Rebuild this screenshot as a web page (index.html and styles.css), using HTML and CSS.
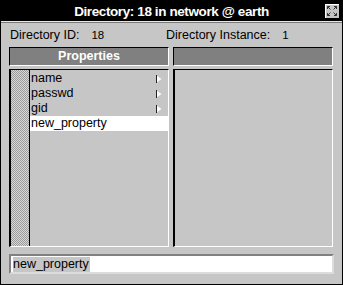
FILE: index.html
```html
<!DOCTYPE html>
<html>
<head>
    <meta charset="UTF-8">
    <title>Directory</title>
    <link rel="stylesheet" href="styles.css">
</head>
<body>
    <div class="window">
        <div class="titlebar">
            <span class="title">Directory: 18 in network @ earth</span>
            <span class="close-btn">
                <svg width="14" height="14" viewBox="0 0 14 14">
                    <rect x="0" y="0" width="14" height="14" fill="#c6c6c6"/>
                    <path d="M0 0.5H14M0.5 0V14" stroke="#fff"/>
                    <path d="M2.5 2.5L5.5 5.5M2.5 2.5V5M2.5 2.5H5" stroke="#333" fill="none"/>
                    <path d="M11.5 2.5L8.5 5.5M11.5 2.5V5M11.5 2.5H9" stroke="#333" fill="none"/>
                    <path d="M2.5 11.5L5.5 8.5M2.5 11.5V9M2.5 11.5H5" stroke="#333" fill="none"/>
                    <path d="M11.5 11.5L8.5 8.5M11.5 11.5V9M11.5 11.5H9" stroke="#333" fill="none"/>
                </svg>
            </span>
        </div>
        <div class="content">
            <div class="info-row">
                <div class="info first"><span class="label">Directory ID:</span><span class="value">18</span></div>
                <div class="info"><span class="label">Directory Instance:</span><span class="value">1</span></div>
            </div>
            <div class="columns">
                <div class="column">
                    <div class="col-header">Properties</div>
                    <div class="panel">
                        <div class="hatch"></div>
                        <ul class="list">
                            <li class="item">name <svg class="arrow" width="6" height="8" viewBox="0 0 6 8"><path d="M0.5 0.5L5.5 4L0.5 7.5Z" fill="#fff"/><path d="M0.5 0V8" stroke="#222"/></svg></li>
                            <li class="item">passwd <svg class="arrow" width="6" height="8" viewBox="0 0 6 8"><path d="M0.5 0.5L5.5 4L0.5 7.5Z" fill="#fff"/><path d="M0.5 0V8" stroke="#222"/></svg></li>
                            <li class="item">gid <svg class="arrow" width="6" height="8" viewBox="0 0 6 8"><path d="M0.5 0.5L5.5 4L0.5 7.5Z" fill="#fff"/><path d="M0.5 0V8" stroke="#222"/></svg></li>
                            <li class="item selected">new_property</li>
                        </ul>
                    </div>
                </div>
                <div class="column">
                    <div class="col-header"></div>
                    <div class="panel"></div>
                </div>
            </div>
            <div class="field"><span class="field-text">new_property</span></div>
        </div>
    </div>
</body>
</html>
```

FILE: styles.css
```css
body {
    margin: 0;
    background-color: #c6c6c6;
    font-family: 'Liberation Sans', Arial, sans-serif;
}

.window {
    width: 343px;
    height: 285px;
    box-sizing: border-box;
    border: 1px solid #000;
    background-color: #c6c6c6;
    display: flex;
    flex-direction: column;
}

.titlebar {
    height: 20px;
    background-color: #000;
    border-bottom: 1px solid #e6e6e6;
    display: flex;
    align-items: center;
    justify-content: center;
    position: relative;
}

.title {
    color: #fff;
    font-weight: bold;
    font-size: 13.5px;
    letter-spacing: -0.4px;
}

.close-btn {
    position: absolute;
    right: 3px;
    top: 3px;
    width: 14px;
    height: 14px;
    display: block;
}

.close-btn svg {
    display: block;
}

.content {
    flex: 1;
    border-top: 1px solid #7a7a7a;
    padding: 0 8px;
    display: flex;
    flex-direction: column;
}

.info-row {
    display: flex;
    height: 24px;
    align-items: center;
    font-size: 12.5px;
    color: #000;
}

.info {
    padding-left: 1px;
}

.info.first {
    width: 155px;
}

.info .value {
    margin-left: 12px;
    font-size: 11.5px;
}

.columns {
    display: flex;
    gap: 4px;
}

.column {
    width: 160px;
    display: flex;
    flex-direction: column;
}

.col-header {
    height: 17px;
    background-color: #808080;
    border-top: 1px solid #000;
    border-left: 1px solid #000;
    border-bottom: 1px solid #fff;
    border-right: 1px solid #fff;
    color: #fff;
    font-weight: bold;
    font-size: 12.5px;
    text-align: center;
    line-height: 17px;
}

.panel {
    margin-top: 3px;
    height: 176px;
    border-top: 1px solid #000;
    border-left: 2px solid #000;
    border-bottom: 1px solid #fff;
    border-right: 1px solid #fff;
    display: flex;
}

.hatch {
    width: 18px;
    border-right: 1px solid #000;
    background: repeating-conic-gradient(#9a9a9a 0 25%, #d8d8d8 0 50%) 0 0 / 2px 2px;
}

.list {
    list-style: none;
    margin: 0;
    padding: 1px 0 0 0;
    flex: 1;
}

.item {
    height: 15px;
    line-height: 15px;
    font-size: 12.5px;
    padding-left: 1px;
    position: relative;
}

.item.selected {
    background-color: #fff;
}

.arrow {
    position: absolute;
    right: 6px;
    top: 4px;
}

.field {
    margin-top: 7px;
    height: 16px;
    background-color: #fff;
    border-top: 2px solid #808080;
    border-left: 2px solid #808080;
    border-bottom: 2px solid #dcdcdc;
    border-right: 2px solid #dcdcdc;
    padding-left: 2px;
    display: flex;
    align-items: center;
}

.field-text {
    background-color: #c6c6c6;
    font-size: 12.5px;
    line-height: 15px;
    padding-right: 1px;
}
```
